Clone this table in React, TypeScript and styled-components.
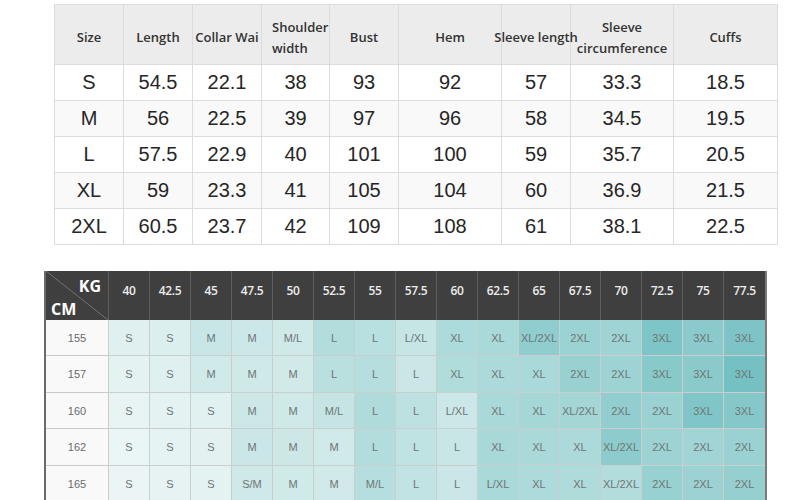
import React from "react";
import styled, { createGlobalStyle } from "styled-components";

const Global = createGlobalStyle`
  html, body { margin: 0; padding: 0; background: #ffffff; }
  body { font-family: "Liberation Sans", Arial, sans-serif; }
  * { box-sizing: border-box; }
`;

const Page = styled.div`
  width: 790px;
  height: 500px;
  overflow: hidden;
  padding-top: 4px;
  display: flex;
  flex-direction: column;
  align-items: flex-start;
`;

/* ---------- Garment measurement table ---------- */

const SIZE_COLS = "69px 69px 69px 68px 69px 103px 69px 103px 104px";

const SizeTable = styled.div`
  margin-left: 54px;
  border-left: 1px solid #dcdcdc;
  border-top: 1px solid #dcdcdc;
`;

const SizeHeadRow = styled.div`
  display: grid;
  grid-template-columns: ${SIZE_COLS};
  height: 60px;
  background: #ececec;
`;

const SizeHead = styled.div<{ $align?: "left" | "center" }>`
  display: flex;
  align-items: center;
  justify-content: ${(p) => (p.$align === "left" ? "flex-start" : "center")};
  padding: 6px 0 0 ${(p) => (p.$align === "left" ? "10px" : "0")};
  text-align: ${(p) => p.$align ?? "center"};
  border-right: 1px solid #dcdcdc;
  border-bottom: 1px solid #dcdcdc;
  font-family: "Open Sans", "Liberation Sans", sans-serif;
  font-weight: 600;
  font-size: 13px;
  line-height: 21px;
  color: #333333;
  white-space: nowrap;
`;

const SizeRow = styled.div<{ $striped: boolean }>`
  display: grid;
  grid-template-columns: ${SIZE_COLS};
  height: 36px;
  background: ${(p) => (p.$striped ? "#f9f9f9" : "#ffffff")};
`;

const SizeCell = styled.div`
  display: flex;
  align-items: center;
  justify-content: center;
  border-right: 1px solid #dcdcdc;
  border-bottom: 1px solid #dcdcdc;
  font-family: "Liberation Sans", Arial, sans-serif;
  font-size: 20px;
  color: #262626;
`;

const sizeHeads: { label: React.ReactNode; align?: "left" | "center" }[] = [
  { label: "Size" },
  { label: "Length" },
  { label: "Collar Wai" },
  {
    label: (
      <span>
        Shoulder
        <br />
        width
      </span>
    ),
    align: "left",
  },
  { label: "Bust" },
  { label: "Hem" },
  { label: "Sleeve length" },
  {
    label: (
      <span>
        Sleeve
        <br />
        circumference
      </span>
    ),
  },
  { label: "Cuffs" },
];

const sizeRows: string[][] = [
  ["S", "54.5", "22.1", "38", "93", "92", "57", "33.3", "18.5"],
  ["M", "56", "22.5", "39", "97", "96", "58", "34.5", "19.5"],
  ["L", "57.5", "22.9", "40", "101", "100", "59", "35.7", "20.5"],
  ["XL", "59", "23.3", "41", "105", "104", "60", "36.9", "21.5"],
  ["2XL", "60.5", "23.7", "42", "109", "108", "61", "38.1", "22.5"],
];

/* ---------- Height / weight fit table ---------- */

const FIT_COLS = "63px repeat(16, 41px)";

const FitTable = styled.div`
  margin: 26px 0 0 44px;
  border-left: 2px solid #6a6a6a;
  border-right: 2px solid #7a7a7a;
`;

const FitHeadRow = styled.div`
  display: grid;
  grid-template-columns: ${FIT_COLS};
  height: 49px;
  background: #3f3f3f;
`;

const Corner = styled.div`
  display: flex;
  flex-direction: column;
  justify-content: space-between;
  padding: 6px 7px 1px 5px;
  border-right: 1px solid #5e5e5e;
  background: linear-gradient(
    to top right,
    transparent calc(50% - 0.7px),
    #777777 50%,
    transparent calc(50% + 0.7px)
  );
  font-family: "Open Sans", "Liberation Sans", sans-serif;
  font-weight: 700;
  font-size: 16px;
  line-height: 19px;
  color: #ffffff;
`;

const CornerLabel = styled.span<{ $end?: boolean }>`
  align-self: ${(p) => (p.$end ? "flex-end" : "flex-start")};
`;

const WeightHead = styled.div<{ $last?: boolean }>`
  display: flex;
  align-items: center;
  justify-content: center;
  padding-bottom: 11px;
  border-right: ${(p) => (p.$last ? "none" : "1px solid #5e5e5e")};
  font-family: "Open Sans", "Liberation Sans", sans-serif;
  font-weight: 600;
  font-size: 12px;
  letter-spacing: -0.3px;
  color: #ececec;
`;

const FitRow = styled.div<{ $h: number }>`
  display: grid;
  grid-template-columns: ${FIT_COLS};
  height: ${(p) => p.$h}px;
`;

const HeightCell = styled.div`
  display: flex;
  align-items: center;
  justify-content: center;
  background: #f9f9f9;
  border-right: 1px solid #cbcbcb;
  border-bottom: 1px solid #cbcbcb;
  font-family: "Liberation Sans", Arial, sans-serif;
  font-size: 11px;
  color: #6a6a6a;
`;

const FitCell = styled.div<{ $bg: string; $last?: boolean }>`
  display: flex;
  align-items: center;
  justify-content: center;
  background: ${(p) => p.$bg};
  border-right: ${(p) => (p.$last ? "none" : "1px solid #c9cfcf")};
  border-bottom: 1px solid #c9cfcf;
  font-family: "Liberation Sans", Arial, sans-serif;
  font-size: 11px;
  color: #6e7676;
  white-space: nowrap;
`;

const weights = ["40", "42.5", "45", "47.5", "50", "52.5", "55", "57.5", "60", "62.5", "65", "67.5", "70", "72.5", "75", "77.5"];

const fitRows: { h: string; height: number; sizes: string[]; colors: string[] }[] = [
  {
    h: "155",
    height: 36,
    sizes: ["S", "S", "M", "M", "M/L", "L", "L", "L/XL", "XL", "XL", "XL/2XL", "2XL", "2XL", "3XL", "3XL", "3XL"],
    colors: ["#e0f0f0", "#dcefef", "#c9e6e6", "#cce7e7", "#cfe9e9", "#b3dddd", "#b9e0e0", "#c6e5e5", "#acdbdb", "#a9d9d9", "#8fcdce", "#9bd2d3", "#9fd4d4", "#7ec5c7", "#8acacc", "#7ec4c7"],
  },
  {
    h: "157",
    height: 37,
    sizes: ["S", "S", "M", "M", "M", "L", "L", "L", "XL", "XL", "XL", "2XL", "2XL", "3XL", "3XL", "3XL"],
    colors: ["#e4f2f2", "#e0f0f0", "#d0e9e9", "#cfe8e8", "#d1e9e9", "#badfdf", "#b6dede", "#cae6e6", "#b1dcdc", "#acdada", "#a9d9d9", "#99d1d1", "#9dd3d3", "#88c9ca", "#8bcacb", "#74c0c3"],
  },
  {
    h: "160",
    height: 36,
    sizes: ["S", "S", "S", "M", "M", "M/L", "L", "L", "L/XL", "XL", "XL", "XL/2XL", "2XL", "2XL", "3XL", "3XL"],
    colors: ["#e8f4f4", "#e4f2f2", "#e1f0f0", "#cde7e7", "#cfe8e8", "#c6e4e4", "#b0dbdb", "#bde1e1", "#cce7e7", "#aad9d9", "#a6d7d7", "#a4d6d6", "#92cecf", "#9ad1d2", "#80c6c8", "#86c8ca"],
  },
  {
    h: "162",
    height: 37,
    sizes: ["S", "S", "S", "M", "M", "M", "L", "L", "L", "XL", "XL", "XL", "XL/2XL", "2XL", "2XL", "2XL"],
    colors: ["#eaf5f5", "#e6f3f3", "#e3f1f1", "#cbe6e6", "#cde7e7", "#d0e9e9", "#b3dcdc", "#bfe2e2", "#c8e6e6", "#a8d8d8", "#aad9d9", "#acdada", "#8dcccd", "#9ed3d4", "#a0d4d5", "#9ad2d3"],
  },
  {
    h: "165",
    height: 36,
    sizes: ["S", "S", "S", "S/M", "M", "M", "M/L", "L", "L", "L/XL", "XL", "XL", "XL/2XL", "2XL", "2XL", "2XL"],
    colors: ["#ebf5f5", "#e7f3f3", "#e4f2f2", "#cfe8e8", "#d0e9e9", "#d2e9e9", "#b6dede", "#c1e3e3", "#cae6e6", "#a9d9d9", "#addada", "#afdbdb", "#b3dddd", "#98d1d2", "#9cd2d3", "#96cfd0"],
  },
];

export default function App() {
  return (
    <>
      <Global />
      <Page>
        <SizeTable>
          <SizeHeadRow>
            {sizeHeads.map((h, i) => (
              <SizeHead key={i} $align={h.align}>
                {h.label}
              </SizeHead>
            ))}
          </SizeHeadRow>
          {sizeRows.map((row, r) => (
            <SizeRow key={r} $striped={r % 2 === 1}>
              {row.map((v, c) => (
                <SizeCell key={c}>{v}</SizeCell>
              ))}
            </SizeRow>
          ))}
        </SizeTable>

        <FitTable>
          <FitHeadRow>
            <Corner>
              <CornerLabel $end>KG</CornerLabel>
              <CornerLabel>CM</CornerLabel>
            </Corner>
            {weights.map((w, i) => (
              <WeightHead key={w} $last={i === weights.length - 1}>
                {w}
              </WeightHead>
            ))}
          </FitHeadRow>
          {fitRows.map((row) => (
            <FitRow key={row.h} $h={row.height}>
              <HeightCell>{row.h}</HeightCell>
              {row.sizes.map((s, i) => (
                <FitCell key={i} $bg={row.colors[i]} $last={i === row.sizes.length - 1}>
                  {s}
                </FitCell>
              ))}
            </FitRow>
          ))}
        </FitTable>
      </Page>
    </>
  );
}
